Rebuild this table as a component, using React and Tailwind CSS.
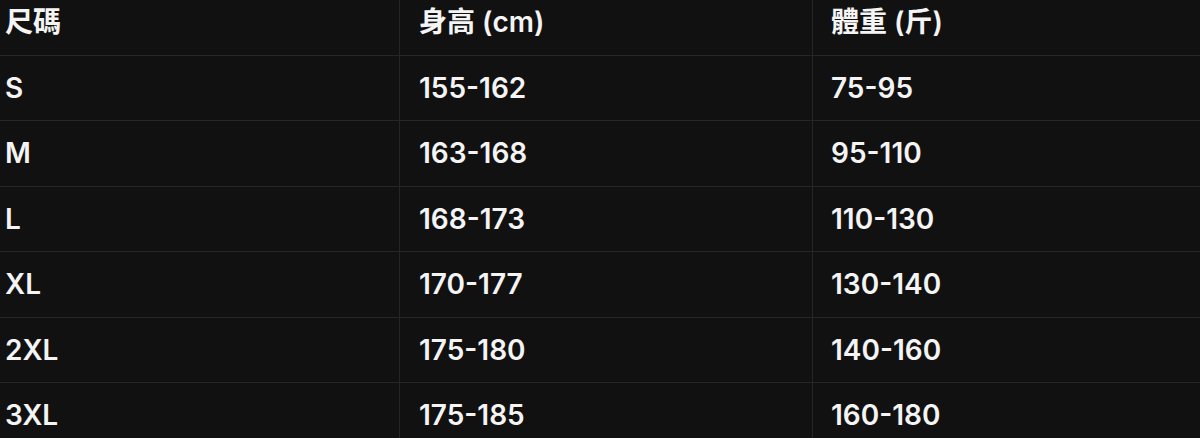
import React from 'react';

const rows = [
  ['S', '155-162', '75-95'],
  ['M', '163-168', '95-110'],
  ['L', '168-173', '110-130'],
  ['XL', '170-177', '130-140'],
  ['2XL', '175-180', '140-160'],
  ['3XL', '175-185', '160-180'],
];

function Row({ cells, header }) {
  return (
    <div className={`flex h-[65.5px] shrink-0 ${header ? '' : 'border-t border-[#262626]'}`}>
      <div className="w-[400px] shrink-0 flex items-center pl-[5px] border-r border-[#262626]">{cells[0]}</div>
      <div className="w-[413px] shrink-0 flex items-center pl-[19px] border-r border-[#262626]">{cells[1]}</div>
      <div className="flex-1 flex items-center pl-[18px]">{cells[2]}</div>
    </div>
  );
}

export default function App() {
  return (
    <div
      className="w-[1200px] h-[438px] overflow-hidden bg-[#111111] text-[#f4f4f4] text-[28px] font-semibold"
      style={{ fontFamily: 'Inter, "Noto Sans CJK TC", sans-serif' }}
    >
      <div className="flex flex-col -mt-[11px]">
        <Row header cells={['尺碼', '身高 (cm)', '體重 (斤)']} />
        {rows.map((r) => (
          <Row key={r[0]} cells={r} />
        ))}
      </div>
    </div>
  );
}
